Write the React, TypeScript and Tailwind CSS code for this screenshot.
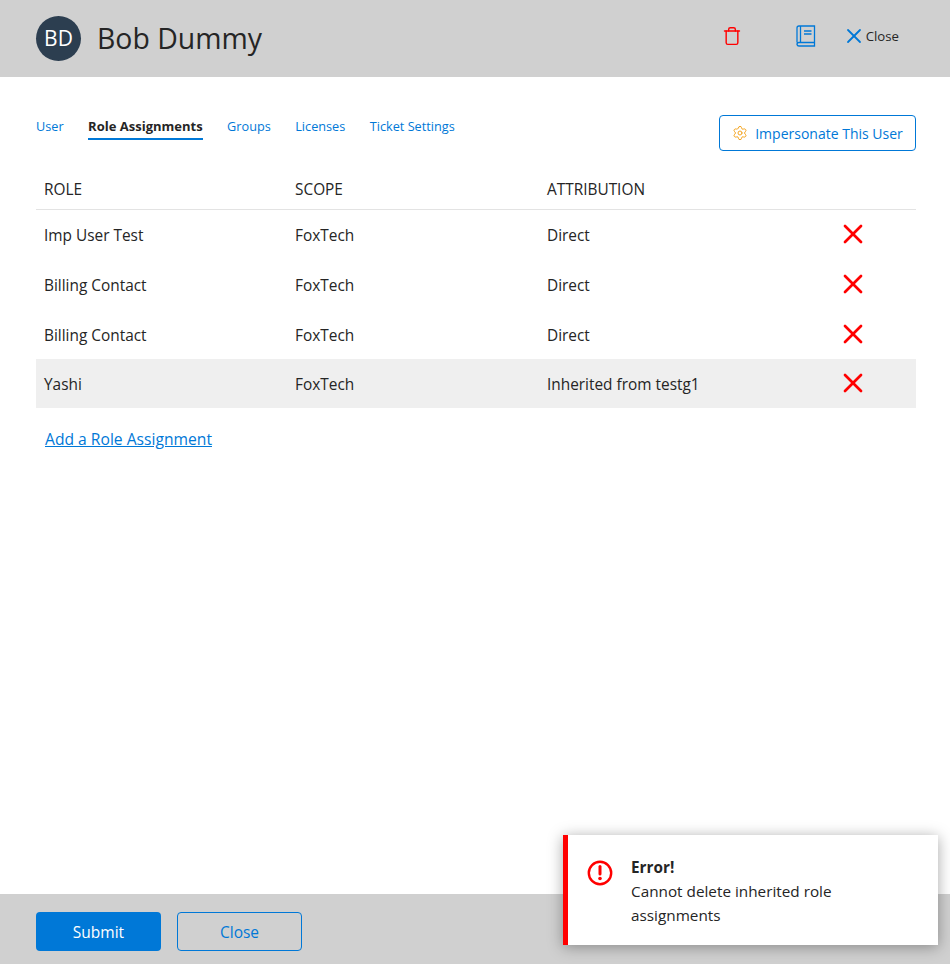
import { Settings, Trash, X } from "lucide-react";

const rows = [
    { role: "Imp User Test", scope: "FoxTech", attribution: "Direct", height: "h-[50px]" },
    { role: "Billing Contact", scope: "FoxTech", attribution: "Direct", height: "h-[50px]" },
    { role: "Billing Contact", scope: "FoxTech", attribution: "Direct", height: "h-[49px]" },
    { role: "Yashi", scope: "FoxTech", attribution: "Inherited from testg1", height: "h-[49px] bg-[#efefef]" },
];

const tabs = ["User", "Role Assignments", "Groups", "Licenses", "Ticket Settings"];

function BookIcon() {
    return (
        <svg width="20" height="22" viewBox="0 0 20 22" fill="none" stroke="#0078d7" strokeWidth="1.3">
            <path d="M1 17.5V3a2 2 0 0 1 2-2h15.5v16.5H3a2 2 0 0 0-2 2 2 2 0 0 0 2 1.5h15.5v-4" />
            <path d="M4.5 1v16.5" />
            <path d="M8 6h7.5M8 9h7.5" />
        </svg>
    );
}

function ErrorIcon() {
    return (
        <svg width="26" height="26" viewBox="0 0 26 26" fill="none">
            <circle cx="13" cy="13" r="11.2" stroke="#ff0000" strokeWidth="2.4" />
            <path d="M13 6.5v7.5" stroke="#ff0000" strokeWidth="3" strokeLinecap="round" />
            <circle cx="13" cy="18.5" r="1.8" fill="#ff0000" />
        </svg>
    );
}

function App() {
    return (
        <div className="relative flex h-[964px] flex-col overflow-hidden bg-white font-['Open_Sans',sans-serif] text-[#252525]">
            <header className="flex h-[77px] items-center bg-[#d0d0d0] pl-9 pr-[51px]">
                <div className="flex h-[45px] w-[45px] items-center justify-center rounded-full bg-[#2c3e50] text-[21px] text-white">BD</div>
                <h1 className="ml-4 text-[28.4px]">Bob Dummy</h1>
                <div className="ml-auto flex items-center pb-[5px]">
                    <Trash size={20} color="#ff0000" strokeWidth={1.7} />
                    <div className="ml-[54px]"><BookIcon /></div>
                    <button className="ml-[26px] flex items-center text-[13.2px]">
                        <X size={24} color="#0078d7" strokeWidth={1.8} />
                        <span className="pt-[2px]">Close</span>
                    </button>
                </div>
            </header>

            <main className="flex-1 pl-9 pr-[34px]">
                <div className="flex items-start justify-between pt-[38px]">
                    <nav className="flex gap-[24.5px] pt-[2px] text-[12.7px]">
                        {tabs.map((tab) =>
                            tab === "Role Assignments" ? (
                                <a key={tab} className="border-b-2 border-[#0078d7] pb-[1px] text-[13px] font-bold">{tab}</a>
                            ) : (
                                <a key={tab} className="text-[#0078d7]">{tab}</a>
                            )
                        )}
                    </nav>
                    <button className="flex h-9 w-[197px] items-center justify-center gap-[7px] rounded border border-[#0078d7] text-[14px] text-[#0078d7]">
                        <Settings size={16} color="#f5a623" strokeWidth={1.5} />
                        Impersonate This User
                    </button>
                </div>

                <div className="mt-[19px] grid h-10 grid-cols-[251px_252px_1fr] items-center border-b border-[#e3e3e3] px-2 text-[15.4px]">
                    <div>ROLE</div>
                    <div>SCOPE</div>
                    <div>ATTRIBUTION</div>
                </div>
                {rows.map((row, i) => (
                    <div key={i} className={`grid grid-cols-[251px_252px_264px_1fr] items-center px-2 text-[15.4px] ${row.height}`}>
                        <div className="pt-[2px]">{row.role}</div>
                        <div className="pt-[2px]">{row.scope}</div>
                        <div className="pt-[2px]">{row.attribution}</div>
                        <div className="pb-[2px]"><X size={32} color="#ff0000" strokeWidth={2} className="ml-[26px]" /></div>
                    </div>
                ))}
                <a className="ml-[9px] mt-[20px] block text-[15.65px] text-[#0078d7] underline">Add a Role Assignment</a>
            </main>

            <footer className="flex h-[70px] items-center gap-4 bg-[#d0d0d0] pl-9 pt-[5px]">
                <button className="h-[39px] w-[125px] rounded bg-[#0078d7] pt-[2px] text-[15.5px] font-medium text-white">Submit</button>
                <button className="h-[39px] w-[125px] rounded border border-[#0078d7] pt-[2px] text-[15.5px] text-[#0078d7]">Close</button>
            </footer>

            <div className="absolute left-[563px] top-[835px] flex h-[110px] w-[375px] border-l-[5px] border-[#ff0000] bg-white shadow-[0_2px_14px_rgba(0,0,0,0.35)]">
                <div className="pl-[19px] pt-[25px]"><ErrorIcon /></div>
                <div className="pl-[18px] pt-[20px] text-[15.3px] leading-6">
                    <div className="font-bold">Error!</div>
                    <div className="w-[250px]">Cannot delete inherited role assignments</div>
                </div>
            </div>
        </div>
    );
}

export default App;
